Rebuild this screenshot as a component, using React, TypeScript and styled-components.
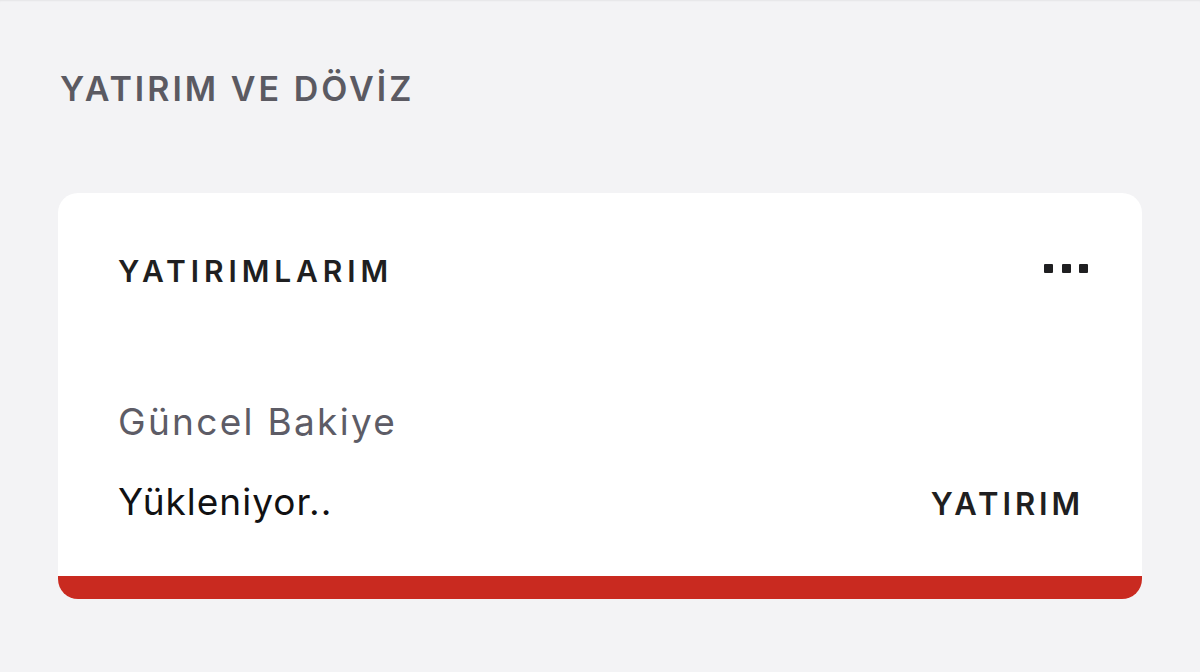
import React from "react"
import styled, { createGlobalStyle } from "styled-components"

const GlobalStyle = createGlobalStyle`
  html, body {
    margin: 0;
    padding: 0;
    background: #f3f3f5;
    font-family: Inter, "Noto Sans", sans-serif;
  }
`

const Page = styled.div`
  display: flex;
  flex-direction: column;
  box-sizing: border-box;
  width: 100%;
  min-height: 672px;
  padding: 0 58px;
  background: #f3f3f5;
  box-shadow: inset 0 2px 2px -1px rgba(0, 0, 0, 0.06);
`

const SectionTitle = styled.h2`
  margin: 67px 0 0 2px;
  font-size: 34px;
  font-weight: 600;
  letter-spacing: 3px;
  color: #5b5a62;
  line-height: 44px;
`

const Card = styled.section`
  display: flex;
  flex-direction: column;
  margin-top: 82px;
  background: #ffffff;
  border-radius: 20px;
  overflow: hidden;
`

const CardBody = styled.div`
  display: flex;
  flex-direction: column;
  padding: 58px 58px 50px 60px;
`

const HeaderRow = styled.div`
  display: flex;
  justify-content: space-between;
  align-items: center;
`

const CardTitle = styled.h3`
  margin: 0;
  font-size: 30px;
  font-weight: 600;
  letter-spacing: 4.9px;
  color: #1f1f21;
  line-height: 40px;
`

const Dots = styled.div`
  display: flex;
  gap: 8.5px;
  margin-right: -4px;
  margin-top: -6px;
`

const Dot = styled.span`
  width: 9px;
  height: 9px;
  background: #1f1f21;
  border-radius: 1px;
`

const Label = styled.div`
  margin-top: 107px;
  font-size: 37px;
  letter-spacing: 2.3px;
  color: #5d5c66;
  line-height: 48px;
`

const FooterRow = styled.div`
  display: flex;
  justify-content: space-between;
  align-items: baseline;
  margin-top: 32px;
`

const Value = styled.div`
  font-size: 37px;
  letter-spacing: 1px;
  color: #111113;
  line-height: 48px;
`

const ActionLink = styled.button`
  border: none;
  background: none;
  padding: 0;
  font-family: inherit;
  font-size: 31px;
  font-weight: 600;
  letter-spacing: 3.9px;
  color: #1f1f21;
  line-height: 40px;
`

const AccentBar = styled.div`
  height: 23px;
  background: #c92a20;
`

export default function App() {
  return (
    <>
      <GlobalStyle />
      <Page>
        <SectionTitle>YATIRIM VE DÖVİZ</SectionTitle>
        <Card>
          <CardBody>
            <HeaderRow>
              <CardTitle>YATIRIMLARIM</CardTitle>
              <Dots>
                <Dot />
                <Dot />
                <Dot />
              </Dots>
            </HeaderRow>
            <Label>Güncel Bakiye</Label>
            <FooterRow>
              <Value>Yükleniyor..</Value>
              <ActionLink>YATIRIM</ActionLink>
            </FooterRow>
          </CardBody>
          <AccentBar />
        </Card>
      </Page>
    </>
  )
}
